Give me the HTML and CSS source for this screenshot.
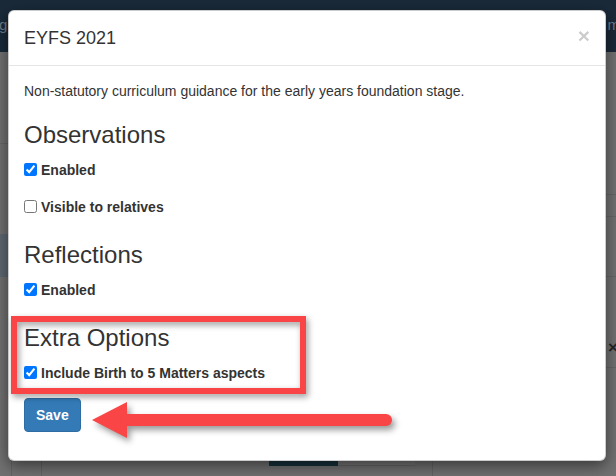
FILE: index.html
```html
<!DOCTYPE html>
<html>
<head>
<meta charset="utf-8">
<title>EYFS 2021</title>
<link rel="stylesheet" href="styles.css">
</head>
<body>
<div class="page">
  <header class="navbar"><span class="nav-l">g</span><span class="nav-r">m</span></header>
  <div class="page-body">
    <div class="col col-a"><div class="side-line"></div><div class="side-item"></div></div>
    <div class="col col-b"></div>
    <div class="col col-main"><div class="bg-btns"><span class="bg-btn dark"></span><span class="bg-btn light"></span></div></div>
    <div class="col col-right">
      <div class="r-row r1"></div>
      <div class="r-row r2"></div>
      <div class="r-row r3"></div>
      <div class="r-row r4"><span class="r-x">×</span></div>
    </div>
  </div>
</div>

<div class="modal">
  <div class="modal-header">
    <button class="close" type="button">×</button>
    <h4 class="modal-title">EYFS 2021</h4>
  </div>
  <div class="modal-body">
    <p class="desc">Non-statutory curriculum guidance for the early years foundation stage.</p>
    <h3 class="sec-title first">Observations</h3>
    <label class="check"><input type="checkbox" checked><span>Enabled</span></label>
    <label class="check next"><input type="checkbox"><span>Visible to relatives</span></label>
    <h3 class="sec-title">Reflections</h3>
    <label class="check"><input type="checkbox" checked><span>Enabled</span></label>
    <h3 class="sec-title">Extra Options</h3>
    <label class="check"><input type="checkbox" checked><span>Include Birth to 5 Matters aspects</span></label>
    <button class="btn-save" type="button">Save</button>
  </div>
</div>

<div class="annot-box"></div>
<svg class="annot-arrow" width="330" height="60" viewBox="0 0 330 60">
  <polygon points="7,25 42,7 42,43" fill="#f94545"/>
  <rect x="36" y="19" width="271" height="12" rx="6" ry="6" fill="#f94545"/>
</svg>
</body>
</html>
```

FILE: styles.css
```css
* { box-sizing: border-box; }
html, body { margin: 0; padding: 0; }
body {
  width: 616px;
  height: 476px;
  overflow: hidden;
  position: relative;
  background: #717171;
  font-family: "Liberation Sans", Arial, sans-serif;
  color: #333;
}

/* dimmed page behind the modal */
.page { display: flex; flex-direction: column; height: 476px; }
.navbar {
  height: 52px;
  background: #1a2a39;
  display: flex;
  justify-content: space-between;
  align-items: center;
  color: #6f7d8a;
  font-size: 15px;
  padding-bottom: 4px;
}
.nav-l { margin-left: -1px; }
.nav-r { margin-right: -4px; }
.page-body { flex: 1; display: flex; }
.col-a { width: 12px; border-right: 1px solid #646464; display: flex; flex-direction: column; }
.side-line { height: 92px; border-bottom: 1px solid #676767; }
.side-item { margin-top: 90px; height: 43px; background: #5e6771; }
.col-b { width: 30px; border-right: 1px solid #646464; }
.col-main { width: 390px; display: flex; flex-direction: column; }
.bg-btns { margin-top: 404px; margin-left: 227px; display: flex; height: 10px; }
.bg-btn { display: block; height: 10px; }
.bg-btn.dark { width: 69px; background: #17323d; }
.bg-btn.light { width: 77px; background: #777; border-bottom: 1px solid #666; }
.col-right { flex: 1; border-left: 1px solid #646464; display: flex; flex-direction: column; }
.r-row { border-bottom: 1px solid #666; }
.r1 { height: 143px; }
.r2 { height: 22px; }
.r3 { height: 60px; }
.r4 { height: 91px; display: flex; justify-content: flex-end; align-items: flex-end; padding-bottom: 12px; }
.r-x { font-size: 17px; font-weight: bold; color: #262626; margin-right: -2px; line-height: 14px; }

/* modal */
.modal {
  position: absolute;
  left: 8px;
  top: 10px;
  width: 598px;
  background: #fff;
  border: 1px solid rgba(0,0,0,.2);
  border-radius: 6px;
  box-shadow: 0 5px 15px rgba(0,0,0,.5);
}
.modal-header {
  padding: 15px;
  border-bottom: 1px solid #e5e5e5;
}
.modal-title {
  margin: 0;
  font-size: 18px;
  font-weight: normal;
  line-height: 24px;
  color: #333;
}
.close {
  float: right;
  margin-top: -1px;
  padding: 0;
  border: 0;
  background: transparent;
  font-family: "Liberation Sans", Arial, sans-serif;
  font-size: 21px;
  font-weight: bold;
  line-height: 1;
  color: #000;
  opacity: .2;
}
.modal-body {
  padding: 15px 15px 28px;
  display: flex;
  flex-direction: column;
  align-items: flex-start;
}
.desc { margin: 0; font-size: 14px; line-height: 20px; }
.sec-title {
  margin: 25px 0 12px;
  font-size: 24px;
  font-weight: normal;
  line-height: 26px;
  color: #333;
}
.sec-title.first { margin-top: 21px; }
.check {
  display: flex;
  align-items: flex-start;
  font-size: 14px;
  font-weight: bold;
  line-height: 20px;
  color: #333;
}
.check input {
  width: 13px;
  height: 13px;
  margin: 3px 4px 0 0;
  flex: none;
}
.check.next { margin-top: 17px; }
.btn-save {
  margin-top: 15px;
  padding: 6px 11px;
  font-family: "Liberation Sans", Arial, sans-serif;
  font-size: 14px;
  font-weight: bold;
  line-height: 20px;
  color: #fff;
  background: #337ab7;
  border: 1px solid #2e6da4;
  border-radius: 4px;
}

/* annotations */
.annot-box {
  position: absolute;
  left: 11px;
  top: 316px;
  width: 295px;
  height: 78px;
  border: 6px solid #f94545;
  filter: drop-shadow(2px 3px 3px rgba(0,0,0,.4));
}
.annot-arrow {
  position: absolute;
  left: 85px;
  top: 395px;
  filter: drop-shadow(3px 4px 3px rgba(0,0,0,.4));
}
```
